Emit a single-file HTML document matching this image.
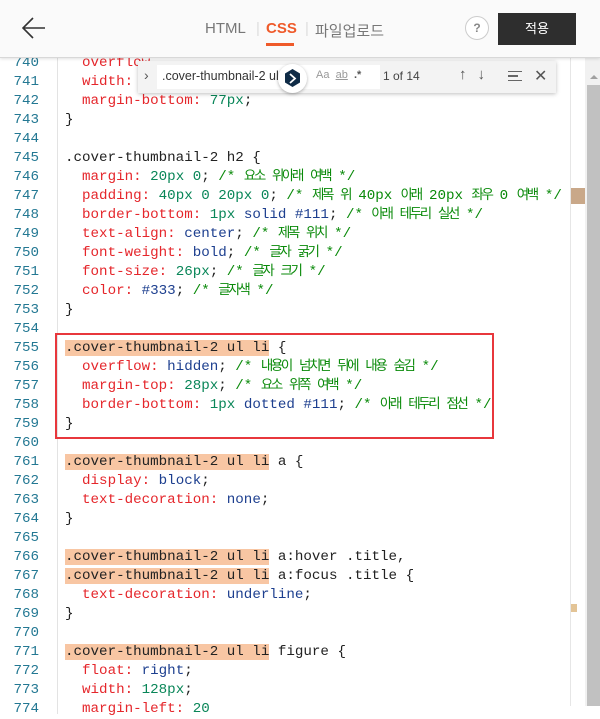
<!DOCTYPE html>
<html><head><meta charset="utf-8"><style>
*{margin:0;padding:0;box-sizing:border-box}
body{width:600px;height:706px;overflow:hidden;background:#fff;font-family:"Liberation Sans","Noto Sans CJK KR",sans-serif;position:relative}
.hdr{position:absolute;left:0;top:0;width:600px;height:58px;background:#fafafa;border-bottom:1px solid #d8d8d8;box-shadow:0 1px 3px rgba(0,0,0,.12)}
.tabs{position:absolute;top:20px;left:205px;font-size:15px;color:#777}
.tabs span{position:absolute;white-space:nowrap}
.code{position:absolute;left:0;top:54px;font-family:"Liberation Mono","Noto Sans CJK KR",monospace;font-size:14.2px}
.ln{position:absolute;left:0;width:600px;height:19px;line-height:19px;white-space:pre}
.n{position:absolute;left:0;width:39px;text-align:right;color:#237893}
.c{position:absolute;left:65px;color:#222}
.p{color:#e5262b}.v{color:#1d3f8f}.d{color:#098658}.g{color:#0a8a0a}
.k{font-size:13.5px;letter-spacing:-2.4px;word-spacing:2.4px}
.hl{background:#f8c6a3}
</style></head><body>
<div class="code">
<div style="position:absolute;left:57px;top:0;width:1px;height:660px;background:#e3e3e3"></div>
<div class="ln" style="top:0"><span class="n">740</span><span class="c">  <span class="p">overflow</span></span></div>
<div class="ln" style="top:19px"><span class="n">741</span><span class="c">  <span class="p">width:</span> <span class="d">1</span></span></div>
<div class="ln" style="top:38px"><span class="n">742</span><span class="c">  <span class="p">margin-bottom:</span> <span class="d">77px</span>;</span></div>
<div class="ln" style="top:57px"><span class="n">743</span><span class="c">}</span></div>
<div class="ln" style="top:76px"><span class="n">744</span></div>
<div class="ln" style="top:95px"><span class="n">745</span><span class="c">.cover-thumbnail-2 h2 {</span></div>
<div class="ln" style="top:114px"><span class="n">746</span><span class="c">  <span class="p">margin:</span> <span class="d">20px 0</span>; <span class="g">/* <span class="k">요소 위아래 여백 </span>*/</span></span></div>
<div class="ln" style="top:133px"><span class="n">747</span><span class="c">  <span class="p">padding:</span> <span class="d">40px 0 20px 0</span>; <span class="g">/* <span class="k">제목 위 </span>40px <span class="k">아래 </span>20px <span class="k">좌우 </span>0 <span class="k">여백 </span>*/</span></span></div>
<div class="ln" style="top:152px"><span class="n">748</span><span class="c">  <span class="p">border-bottom:</span> <span class="d">1px</span> <span class="v">solid #111</span>; <span class="g">/* <span class="k">아래 테두리 실선 </span>*/</span></span></div>
<div class="ln" style="top:171px"><span class="n">749</span><span class="c">  <span class="p">text-align:</span> <span class="v">center</span>; <span class="g">/* <span class="k">제목 위치 </span>*/</span></span></div>
<div class="ln" style="top:190px"><span class="n">750</span><span class="c">  <span class="p">font-weight:</span> <span class="v">bold</span>; <span class="g">/* <span class="k">글자 굵기 </span>*/</span></span></div>
<div class="ln" style="top:209px"><span class="n">751</span><span class="c">  <span class="p">font-size:</span> <span class="d">26px</span>; <span class="g">/* <span class="k">글자 크기 </span>*/</span></span></div>
<div class="ln" style="top:228px"><span class="n">752</span><span class="c">  <span class="p">color:</span> <span class="v">#333</span>; <span class="g">/* <span class="k">글자색 </span>*/</span></span></div>
<div class="ln" style="top:247px"><span class="n">753</span><span class="c">}</span></div>
<div class="ln" style="top:266px"><span class="n">754</span></div>
<div class="ln" style="top:285px"><span class="n">755</span><span class="c"><span class="hl">.cover-thumbnail-2 ul li</span> {</span></div>
<div class="ln" style="top:304px"><span class="n">756</span><span class="c">  <span class="p">overflow:</span> <span class="v">hidden</span>; <span class="g">/* <span class="k">내용이 넘치면 뒤에 내용 숨김 </span>*/</span></span></div>
<div class="ln" style="top:323px"><span class="n">757</span><span class="c">  <span class="p">margin-top:</span> <span class="d">28px</span>; <span class="g">/* <span class="k">요소 위쪽 여백 </span>*/</span></span></div>
<div class="ln" style="top:342px"><span class="n">758</span><span class="c">  <span class="p">border-bottom:</span> <span class="d">1px</span> <span class="v">dotted #111</span>; <span class="g">/* <span class="k">아래 테두리 점선 </span>*/</span></span></div>
<div class="ln" style="top:361px"><span class="n">759</span><span class="c">}</span></div>
<div class="ln" style="top:380px"><span class="n">760</span></div>
<div class="ln" style="top:399px"><span class="n">761</span><span class="c"><span class="hl">.cover-thumbnail-2 ul li</span> a {</span></div>
<div class="ln" style="top:418px"><span class="n">762</span><span class="c">  <span class="p">display:</span> <span class="v">block</span>;</span></div>
<div class="ln" style="top:437px"><span class="n">763</span><span class="c">  <span class="p">text-decoration:</span> <span class="v">none</span>;</span></div>
<div class="ln" style="top:456px"><span class="n">764</span><span class="c">}</span></div>
<div class="ln" style="top:475px"><span class="n">765</span></div>
<div class="ln" style="top:494px"><span class="n">766</span><span class="c"><span class="hl">.cover-thumbnail-2 ul li</span> a:hover .title,</span></div>
<div class="ln" style="top:513px"><span class="n">767</span><span class="c"><span class="hl">.cover-thumbnail-2 ul li</span> a:focus .title {</span></div>
<div class="ln" style="top:532px"><span class="n">768</span><span class="c">  <span class="p">text-decoration:</span> <span class="v">underline</span>;</span></div>
<div class="ln" style="top:551px"><span class="n">769</span><span class="c">}</span></div>
<div class="ln" style="top:570px"><span class="n">770</span></div>
<div class="ln" style="top:589px"><span class="n">771</span><span class="c"><span class="hl">.cover-thumbnail-2 ul li</span> figure {</span></div>
<div class="ln" style="top:608px"><span class="n">772</span><span class="c">  <span class="p">float:</span> <span class="v">right</span>;</span></div>
<div class="ln" style="top:627px"><span class="n">773</span><span class="c">  <span class="p">width:</span> <span class="d">128px</span>;</span></div>
<div class="ln" style="top:646px"><span class="n">774</span><span class="c">  <span class="p">margin-left:</span> <span class="d">20</span></span></div>
</div>
<div style="position:absolute;left:55px;top:333px;width:439px;height:106px;border:2px solid #e8373c"></div>
<div style="position:absolute;left:570px;top:58px;width:1px;height:648px;background:#e6e6e6"></div>
<div style="position:absolute;left:585px;top:58px;width:15px;height:648px;background:#f1f1f1"></div>
<div style="position:absolute;left:587px;top:85px;width:13px;height:621px;background:#c1c1c1"></div>
<div style="position:absolute;left:590px;top:75px;width:0;height:0;border-left:4px solid transparent;border-right:4px solid transparent;border-bottom:4px solid #a0a0a0"></div>
<div style="position:absolute;left:571px;top:188px;width:14px;height:16px;background:#c9a889"></div>
<div style="position:absolute;left:571px;top:604px;width:6px;height:8px;background:#e3c496"></div>
<div style="position:absolute;left:138px;top:61px;width:418px;height:32px;background:#f3f3f3;box-shadow:0 1px 4px rgba(0,0,0,.25)">
<div style="position:absolute;left:6px;top:6px;font-size:14px;color:#555">›</div>
<div style="position:absolute;left:19px;top:4px;width:223px;height:24px;background:#fff"></div>
<div style="position:absolute;left:24px;top:8px;font-size:12.5px;color:#333;white-space:nowrap">.cover-thumbnail-2 ul</div>
<div style="position:absolute;left:178px;top:8px;font-size:11px;color:#999;white-space:nowrap">Aa&nbsp;&nbsp;<u>ab</u>&nbsp;&nbsp;<b style="color:#555">.*</b></div>
<div style="position:absolute;left:245px;top:8px;font-size:12px;color:#444">1 of 14</div>
<div style="position:absolute;left:321px;top:5px;font-size:15px;color:#555;letter-spacing:11px">↑↓</div>
<div style="position:absolute;left:370px;top:10px;width:14px;height:10px;border-top:1.5px solid #666;border-bottom:1.5px solid #666"><div style="margin-top:3px;width:10px;height:1.5px;background:#666"></div></div>
<div style="position:absolute;left:396px;top:5px;font-size:16px;color:#555">✕</div>
</div>
<div style="position:absolute;left:278px;top:64px;width:29px;height:29px;border-radius:50%;background:#fff;box-shadow:0 1px 3px rgba(0,0,0,.3)">
<svg width="29" height="29" viewBox="0 0 29 29"><polygon points="14.5,5 22,9.5 22,18.5 14.5,23 7,18.5 7,9.5" fill="#0f2b46"/><path d="M12 10l5 4.5-5 4.5" stroke="#fff" stroke-width="1.8" fill="none"/></svg></div>
<div class="hdr">
<svg style="position:absolute;left:22px;top:17px" width="24" height="22" viewBox="0 0 24 22"><path d="M23 11H2M11 1L1 11l10 10" stroke="#333" stroke-width="1.6" fill="none"/></svg>
<div class="tabs">
<span style="left:0">HTML</span>
<span style="left:51px;color:#ddd">|</span>
<span style="left:61px;color:#ef5a2a;font-weight:bold">CSS</span>
<span style="left:100px;color:#ddd">|</span>
<span style="left:110px">파일업로드</span>
</div>
<div style="position:absolute;left:266px;top:43px;width:28px;height:3px;background:#ef5a2a"></div>
<div style="position:absolute;left:465px;top:16px;width:24px;height:24px;border:1px solid #ccc;border-radius:50%;background:#fff;text-align:center;line-height:22px;font-size:12px;color:#888;font-weight:bold">?</div>
<div style="position:absolute;left:498px;top:13px;width:78px;height:32px;background:#2e2e2e;color:#fff;font-size:13px;text-align:center;line-height:32px">적용</div>
</div>
</body></html>
